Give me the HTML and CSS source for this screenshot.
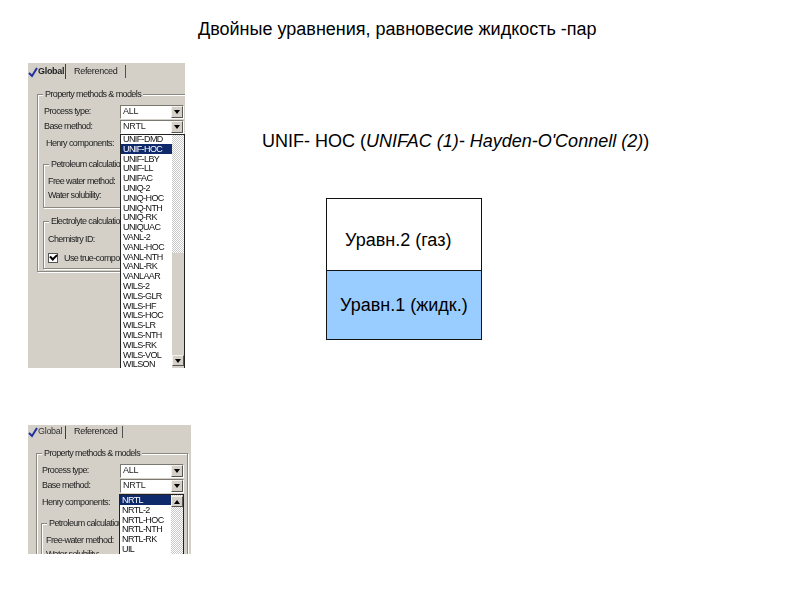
FILE: index.html
```html
<!DOCTYPE html>
<html lang="ru">
<head>
<meta charset="utf-8">
<title>Двойные уравнения</title>
<link rel="stylesheet" href="styles.css">
</head>
<body>
<main class="slide">
  <h1 class="title">Двойные уравнения, равновесие жидкость -пар</h1>

  <section class="dialog dialog-a">
    <div class="tabs">
      <svg class="check" width="10" height="11" viewBox="0 0 10 11"><path d="M1 6l3 3 5-8" fill="none" stroke="#2030a0" stroke-width="2"/></svg>
      <span class="tab tab-active">Global</span>
      <span class="tab tab-other">Referenced</span>
    </div>
    <div class="group outer">
      <span class="legend">Property methods &amp; models</span>
      <div class="row r-first"><span class="label">Process type:</span><span class="combo"><span>ALL</span><i class="arrow"></i></span></div>
      <div class="row"><span class="label">Base method:</span><span class="combo"><span>NRTL</span><i class="arrow"></i></span></div>
      <div class="row r-henry"><span class="label">Henry components:</span></div>
      <div class="group inner petro">
        <span class="legend clip">Petroleum calculations</span>
        <div class="row r-first2"><span class="label">Free water method:</span></div>
        <div class="row"><span class="label">Water solubility:</span></div>
      </div>
      <div class="group inner electro">
        <span class="legend clip">Electrolyte calculations</span>
        <div class="row r-first2"><span class="label">Chemistry ID:</span></div>
        <div class="row r-check"><span class="box"></span><span class="label clip-label">Use true-components</span></div>
      </div>
    </div>
    <div class="list list-a">
      <ul class="items">
        <li>UNIF-DMD</li><li class="sel">UNIF-HOC</li><li>UNIF-LBY</li><li>UNIF-LL</li><li>UNIFAC</li><li>UNIQ-2</li><li>UNIQ-HOC</li><li>UNIQ-NTH</li><li>UNIQ-RK</li><li>UNIQUAC</li><li>VANL-2</li><li>VANL-HOC</li><li>VANL-NTH</li><li>VANL-RK</li><li>VANLAAR</li><li>WILS-2</li><li>WILS-GLR</li><li>WILS-HF</li><li>WILS-HOC</li><li>WILS-LR</li><li>WILS-NTH</li><li>WILS-RK</li><li>WILS-VOL</li><li>WILSON</li>
      </ul>
      <div class="scroll">
        <div class="track"></div>
        <div class="thumb"></div>
        <div class="btn"><i class="arrow-d"></i></div>
      </div>
    </div>
  </section>

  <section class="dialog dialog-b">
    <div class="tabs">
      <svg class="check" width="10" height="11" viewBox="0 0 10 11"><path d="M1 6l3 3 5-8" fill="none" stroke="#2030a0" stroke-width="2"/></svg>
      <span class="tab tab-active">Global</span>
      <span class="tab tab-other">Referenced</span>
    </div>
    <div class="group outer">
      <span class="legend">Property methods &amp; models</span>
      <div class="row r-first"><span class="label">Process type:</span><span class="combo"><span>ALL</span><i class="arrow"></i></span></div>
      <div class="row"><span class="label">Base method:</span><span class="combo"><span>NRTL</span><i class="arrow"></i></span></div>
      <div class="row r-henry"><span class="label">Henry components:</span></div>
      <div class="group inner petro">
        <span class="legend clip">Petroleum calculations</span>
        <div class="row r-first2"><span class="label">Free-water method:</span></div>
        <div class="row"><span class="label">Water solubility:</span></div>
      </div>
    </div>
    <div class="list list-b">
      <ul class="items">
        <li class="sel">NRTL</li><li>NRTL-2</li><li>NRTL-HOC</li><li>NRTL-NTH</li><li>NRTL-RK</li><li>UIL</li>
      </ul>
      <div class="scroll">
        <div class="track"></div>
        <div class="btn btn-up"><i class="arrow-u"></i></div>
      </div>
    </div>
  </section>

  <p class="formula">UNIF- HOC (<em>UNIFAC (1)- Hayden-O'Connell (2)</em>)</p>

  <div class="phases">
    <div class="phase gas"><span>Уравн.2 (газ)</span></div>
    <div class="phase liquid"><span>Уравн.1 (жидк.)</span></div>
  </div>
</main>
</body>
</html>
```
FILE: styles.css
```css
* { box-sizing: border-box; }
html, body { margin: 0; padding: 0; background: #fff; }
.slide {
  position: relative;
  width: 794px;
  height: 595px;
  overflow: hidden;
  font-family: "Liberation Sans", Arial, sans-serif;
  color: #000;
}
.title {
  position: absolute;
  left: 198px;
  top: 20px;
  margin: 0;
  font-size: 18px;
  line-height: 18px;
  font-weight: 400;
  white-space: nowrap;
}
.formula {
  position: absolute;
  left: 262px;
  top: 132px;
  margin: 0;
  font-size: 18px;
  line-height: 18px;
  white-space: nowrap;
}
.phases {
  position: absolute;
  left: 326px;
  top: 198px;
  width: 156px;
  height: 142px;
  display: flex;
  flex-direction: column;
  border: 1px solid #111;
  font-size: 18px;
  line-height: 18px;
}
.phase { display: flex; }
.gas { flex: none; height: 72px; background: #fff; border-bottom: 1px solid #111; padding: 32px 0 0 18px; }
.liquid { flex: 1 1 0; background: #99ccff; padding: 25px 0 0 13px; }

.dialog {
  position: absolute;
  left: 28px;
  background: #d4d0c8;
  overflow: hidden;
  font-size: 9px;
  line-height: 11px;
  letter-spacing: -0.6px;
  color: #222;
  filter: blur(0.5px);
}
.dialog-a { top: 63px; width: 157px; height: 305px; }
.dialog-b { top: 425px; width: 163px; height: 129px; }

.tabs { display: flex; align-items: flex-end; height: 16px; letter-spacing: -0.3px; }
.dialog-b .tabs { height: 14px; }
.check { flex: none; margin-bottom: 1px; }
.tab { display: block; white-space: nowrap; }
.tab-active {
  width: 28px;
  height: 15px;
  padding-top: 2px;
  font-weight: 700;
  border-right: 1px solid #404040;
}
.tab-other {
  width: 60px;
  height: 13px;
  margin-bottom: 1px;
  padding: 1px 0 0 8px;
  border-right: 1px solid #505050;
}
.dialog-b .tab-active { font-weight: 400; color: #333; height: 13px; padding-top: 0; }
.dialog-b .tab-other { width: 57px; height: 12px; padding-top: 0; }

.group {
  position: relative;
  border: 1px solid #8a8880;
  box-shadow: 1px 1px 0 #fff, inset 1px 1px 0 #fff;
}
.legend {
  position: absolute;
  top: -6px;
  left: 5px;
  padding: 0 2px;
  background: #d4d0c8;
  white-space: nowrap;
}
.clip { max-width: 76px; overflow: hidden; }
.clip-label { display: block; max-width: 56px; overflow: hidden; }
.outer { margin: 15px 0 0 9px; width: 170px; height: 178px; padding: 8px 0 0 6px; }
.dialog-b .outer { margin: 14px 0 0 8px; width: 152px; height: 140px; padding: 8px 0 0 5px; }
.inner { width: 110px; margin-left: -1px; }
.petro { height: 44px; margin-top: 12px; padding: 10px 0 0 4px; }
.electro { height: 48px; margin-top: 13px; padding: 10px 0 0 4px; }

.row { display: flex; align-items: center; height: 15px; white-space: nowrap; }
.r-first { margin-top: 1px; }
.r-henry { margin-left: 2px; height: 17px; margin-top: 1px; }
.dialog-b .r-henry { margin-left: 0; }
.r-first2 { height: 13px; }
.r-check { height: 24px; margin-top: -1px; }
.electro .r-first2 { height: 15px; }
.combo {
  position: absolute;
  left: 82px;
  width: 64px;
  height: 14px;
  display: flex;
  align-items: center;
  justify-content: space-between;
  padding-left: 2px;
  letter-spacing: -0.2px;
  background: #fff;
  border: 1px solid #7a7870;
  border-right-color: #fff;
  border-bottom-color: #fff;
}
.dialog-b .combo { left: 83px; }
.arrow {
  display: block;
  position: relative;
  width: 12px;
  height: 12px;
  background: #d4d0c8;
  border: 1px solid #f4f2ec;
  border-right-color: #555;
  border-bottom-color: #555;
}
.arrow::after, .arrow-d::after {
  content: "";
  position: absolute;
  left: 2px;
  top: 3px;
  border: 3px solid transparent;
  border-top: 4px solid #000;
  border-bottom: 0;
}
.box {
  display: block;
  position: relative;
  width: 10px;
  height: 10px;
  margin-right: 6px;
  background: #fff;
  border: 1px solid #555;
}
.box::after {
  content: "";
  position: absolute;
  left: 1px;
  top: 0;
  width: 5px;
  height: 3px;
  border-left: 2px solid #000;
  border-bottom: 2px solid #000;
  transform: rotate(-45deg);
}

.list {
  position: absolute;
  display: flex;
  background: #fff;
  border-left: 1px solid #222;
  color: #111;
  overflow: hidden;
}
.list-a { left: 92px; top: 71px; width: 65px; height: 234px; border-top: 1px solid #222; }
.list-a .items { margin-top: -1px; }
.list-b { left: 91px; top: 69px; width: 65px; height: 60px; border-top: 1px solid #222; }
.items { flex: 1 1 0; margin: 0; padding: 0; list-style: none; }
.items li { height: 9.8px; line-height: 10px; padding-left: 2px; white-space: nowrap; }
.items .sel { background: #0f2a6b; color: #fff; }
.scroll { position: relative; flex: none; width: 13px; background: #d4d0c8; border-right: 1px solid #222; }
.track {
  height: 118px;
  background-color: #e8e8e8;
  background-image: repeating-conic-gradient(#c8c8c8 0 25%, #fff 0 50%);
  background-size: 2px 2px;
}
.list-b .track { height: 60px; }
.thumb { height: 103px; background: #d4d0c8; }
.btn {
  position: absolute;
  left: 0;
  bottom: 2px;
  width: 12px;
  height: 11px;
  background: #d4d0c8;
  border: 1px solid #f4f2ec;
  border-right-color: #555;
  border-bottom-color: #555;
}
.btn-up { top: 1px; bottom: auto; }
.arrow-d { display: block; position: relative; }
.arrow-u { display: block; position: absolute; left: 2px; top: 3px; border: 3px solid transparent; border-bottom: 4px solid #000; border-top: 0; }
```
